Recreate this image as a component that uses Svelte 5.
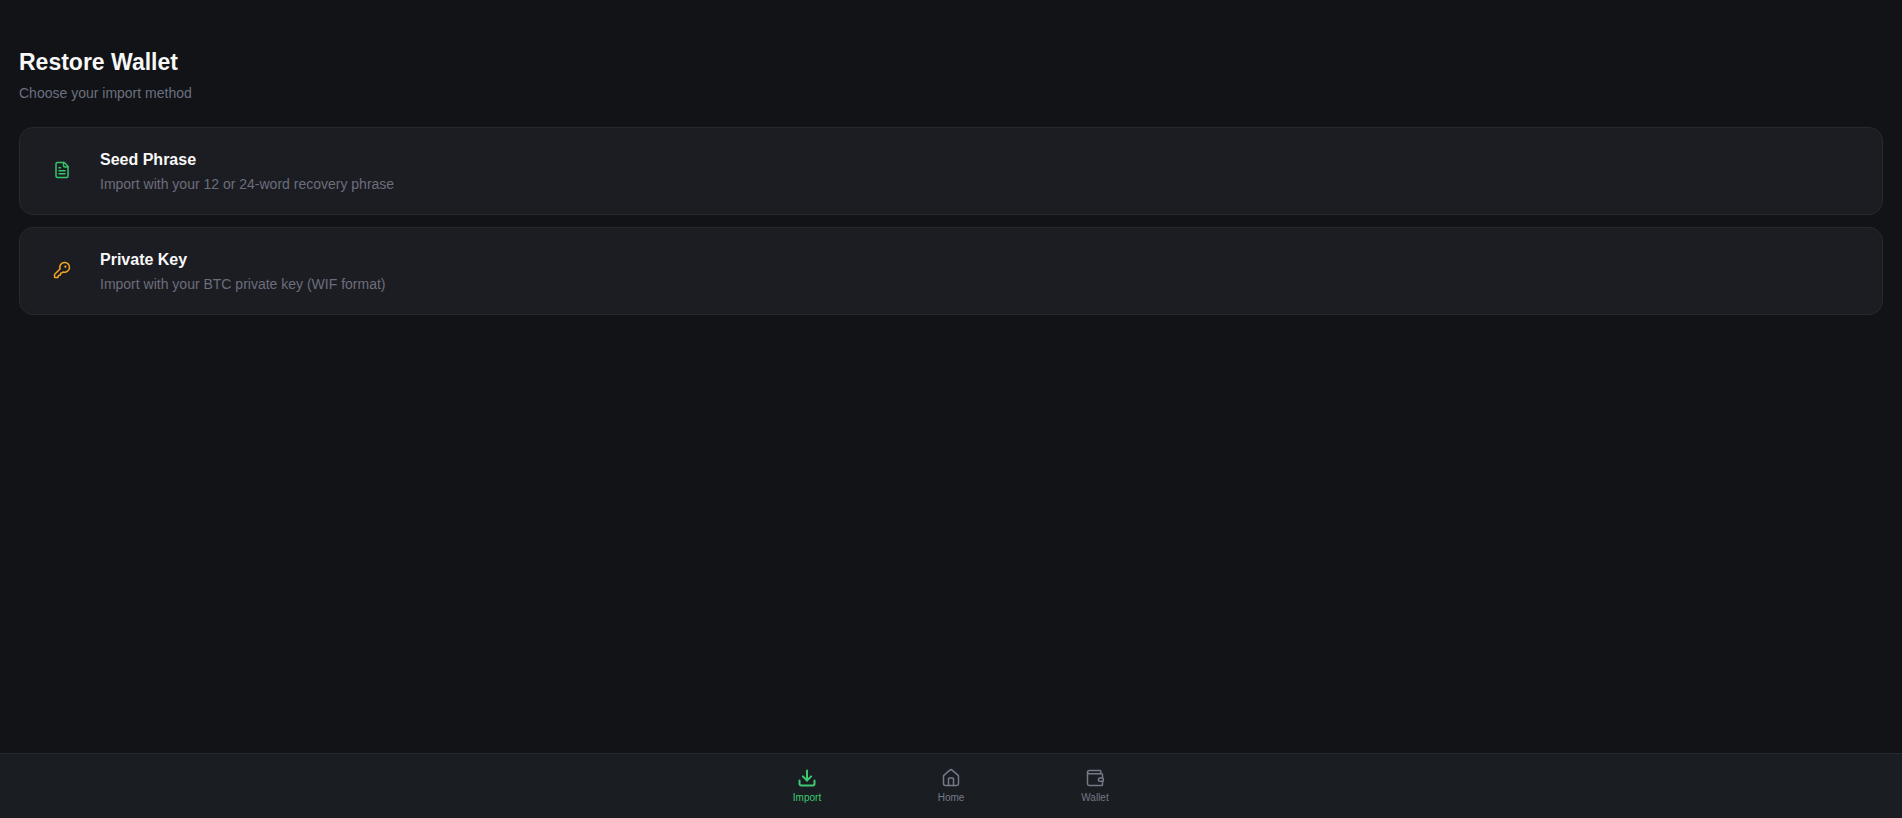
<script lang="ts">
  // --- Types ---
  type Method = {
    id: string;
    title: string;
    description: string;
    tone: 'green' | 'orange';
    paths: string[];
  };

  type Tab = {
    id: string;
    label: string;
    paths: string[];
  };

  // --- Data ---
  const methods: Method[] = [
    {
      id: 'seed',
      title: 'Seed Phrase',
      description: 'Import with your 12 or 24-word recovery phrase',
      tone: 'green',
      paths: [
        'M15 2H6a2 2 0 0 0-2 2v16a2 2 0 0 0 2 2h12a2 2 0 0 0 2-2V7Z',
        'M14 2v4a2 2 0 0 0 2 2h4',
        'M10 9H8',
        'M16 13H8',
        'M16 17H8'
      ]
    },
    {
      id: 'key',
      title: 'Private Key',
      description: 'Import with your BTC private key (WIF format)',
      tone: 'orange',
      paths: [
        'M2.586 17.414A2 2 0 0 0 2 18.828V21a1 1 0 0 0 1 1h3a1 1 0 0 0 1-1v-1a1 1 0 0 1 1-1h1a1 1 0 0 0 1-1v-1a1 1 0 0 1 1-1h.172a2 2 0 0 0 1.414-.586l.814-.814a6.5 6.5 0 1 0-4-4z',
        'M16 7.5a.5.5 0 1 0 1 0a.5.5 0 1 0-1 0'
      ]
    }
  ];

  const tabs: Tab[] = [
    {
      id: 'import',
      label: 'Import',
      paths: ['M12 3v12', 'm7 10 5 5 5-5', 'M21 15v4a2 2 0 0 1-2 2H5a2 2 0 0 1-2-2v-4']
    },
    {
      id: 'home',
      label: 'Home',
      paths: [
        'M15 21v-8a1 1 0 0 0-1-1h-4a1 1 0 0 0-1 1v8',
        'M3 10a2 2 0 0 1 .709-1.528l7-5.999a2 2 0 0 1 2.582 0l7 5.999A2 2 0 0 1 21 10v9a2 2 0 0 1-2 2H5a2 2 0 0 1-2-2z'
      ]
    },
    {
      id: 'wallet',
      label: 'Wallet',
      paths: [
        'M19 7V4a1 1 0 0 0-1-1H5a2 2 0 0 0 0 4h15a1 1 0 0 1 1 1v4h-3a2 2 0 0 0 0 4h3a1 1 0 0 0 1-1v-2a1 1 0 0 0-1-1',
        'M3 5v14a2 2 0 0 0 2 2h15a1 1 0 0 0 1-1v-4'
      ]
    }
  ];

  // --- State ---
  let activeTab = $state('import');
</script>

{#snippet icon(paths: string[], size: number)}
  <svg width={size} height={size} viewBox="0 0 24 24" aria-hidden="true">
    {#each paths as d}
      <path {d} />
    {/each}
  </svg>
{/snippet}

<div class="app">
  <main>
    <header>
      <h1>Restore Wallet</h1>
      <p>Choose your import method</p>
    </header>

    <div class="methods">
      {#each methods as method (method.id)}
        <button class="card" type="button">
          <span class="card-icon {method.tone}">{@render icon(method.paths, 18)}</span>
          <span class="card-text">
            <span class="card-title">{method.title}</span>
            <span class="card-description">{method.description}</span>
          </span>
        </button>
      {/each}
    </div>
  </main>

  <nav aria-label="Main">
    {#each tabs as tab (tab.id)}
      <button
        class="tab"
        class:active={activeTab === tab.id}
        type="button"
        onclick={() => (activeTab = tab.id)}>
        {@render icon(tab.paths, 20)}
        <span>{tab.label}</span>
      </button>
    {/each}
  </nav>
</div>

<style>
  :global(body) {
    background: #111316;
  }

  .app {
    display: flex;
    flex-direction: column;
    min-height: 100vh;
    background: #111316;
    color: #f8f8f8;
    font-family: Arial, 'Liberation Sans', sans-serif;
  }

  main {
    flex: 1;
    padding: 48px 19px 24px;
  }

  header {
    margin-bottom: 24px;
  }

  h1 {
    margin: 0 0 6px;
    font-size: 23px;
    line-height: 29px;
    font-weight: 700;
  }

  p {
    margin: 0;
    color: #6b7080;
    font-size: 14px;
    line-height: 20px;
  }

  .methods {
    display: flex;
    flex-direction: column;
    gap: 12px;
  }

  button {
    font-family: inherit;
    cursor: pointer;
  }

  .card {
    display: flex;
    align-items: flex-start;
    gap: 14px;
    padding: 19px 18px;
    border: 1px solid #27292d;
    border-radius: 14px;
    background: #1c1d22;
    color: inherit;
    text-align: left;
  }

  .card-icon {
    display: flex;
    align-items: center;
    justify-content: center;
    width: 48px;
    height: 46px;
  }

  .green {
    color: #36c46c;
  }

  .orange {
    color: #f5a524;
  }

  .card-text {
    display: flex;
    flex-direction: column;
    gap: 4px;
    padding: 3px 0 1px;
  }

  .card-title {
    font-size: 16px;
    line-height: 20px;
    font-weight: 700;
  }

  .card-description {
    color: #6b6d7c;
    font-size: 14px;
    line-height: 20px;
  }

  svg {
    display: block;
    fill: none;
    stroke: currentColor;
    stroke-width: 2;
    stroke-linecap: round;
    stroke-linejoin: round;
  }

  /* Bottom tab bar, stays at the lower edge while the page scrolls */
  nav {
    position: sticky;
    bottom: 0;
    display: flex;
    justify-content: center;
    border-top: 1px solid #26292d;
    background: #1a1d21;
  }

  .tab {
    display: flex;
    flex-direction: column;
    align-items: center;
    gap: 4px;
    width: 144px;
    padding: 14px 0;
    border: none;
    background: none;
    color: #777989;
    font-size: 10px;
    line-height: 12px;
  }

  .tab svg {
    stroke-width: 1.8;
  }

  .tab.active {
    color: #3ccb72;
  }

  .tab.active svg {
    stroke-width: 2.4;
  }
</style>
